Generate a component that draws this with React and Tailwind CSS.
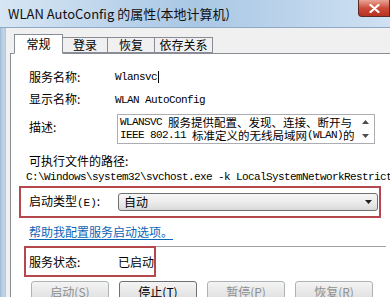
import React from 'react';

const cjk = { fontFamily: '"Noto Sans CJK SC", "Noto Sans", sans-serif' };

const Mono = ({ children }) => (
  <span className="font-['Liberation_Mono',monospace] text-[11px] tracking-[-0.6px] whitespace-pre">{children}</span>
);

const Row = ({ label, children, className = '' }) => (
  <div className={`flex pl-[10px] ${className}`}>
    <div className="w-[89px] shrink-0">{label}</div>
    <div className="flex-1 min-w-0">{children}</div>
  </div>
);

const Btn = ({ children, disabled }) => (
  <div
    className={`w-[78px] h-[22px] shrink-0 flex items-center justify-center rounded-[3px] border bg-gradient-to-b from-[#f4f4f4] to-[#dcdcdc] text-[12px] ${
      disabled ? 'border-[#adb2b5] text-[#8e8f8f]' : 'border-[#707070] text-black'
    }`}
  >
    {children}
  </div>
);

const Tab = ({ children, active, w }) => (
  <div
    className={`flex items-center justify-center border border-[#898c95] ${w} ${
      active
        ? 'h-[20px] bg-white border-b-white -mb-px z-10 relative'
        : 'h-[16px] bg-[#f0f0f0] -ml-px'
    }`}
  >
    {children}
  </div>
);

export default function App() {
  return (
    <div className="w-[390px] h-[297px] overflow-hidden bg-[#f0f0f0] text-black text-[12px] leading-none" style={cjk}>
      {/* Title bar */}
      <div className="h-[28px] flex bg-gradient-to-r from-[#d7e6f4] via-[#a9c7e4] to-[#cfe1f2] border-b border-[#8ea9c6]">
        <div className="flex-1 flex items-center pl-[8px] text-[13px] text-[#111]">WLAN AutoConfig 的属性(本地计算机)</div>
        <div className="w-[32px] h-[17px] bg-gradient-to-b from-[#e9a497] via-[#cc4b3b] to-[#b8321f] border border-[#5c2a24] border-t-0 rounded-bl-[4px] flex items-center justify-center">
          <svg width="11" height="9" viewBox="0 0 11 9">
            <path d="M1.5 1 L9.5 8 M9.5 1 L1.5 8" stroke="white" strokeWidth="2.2" strokeLinecap="round" />
          </svg>
        </div>
      </div>

      <div className="flex h-[269px]">
        {/* Window frame */}
        <div className="w-[6px] shrink-0 bg-gradient-to-r from-[#9fb9d3] via-[#c3d6e8] to-[#b1c8de]" />

        <div className="flex-1 pl-[4px] pt-[6px] flex flex-col">
          {/* Tabs */}
          <div className="flex items-end h-[20px] pl-[4px]">
            <Tab active w="w-[49px]">常规</Tab>
            <Tab w="w-[46px]">登录</Tab>
            <Tab w="w-[48px]">恢复</Tab>
            <Tab w="w-[59px]">依存关系</Tab>
          </div>

          {/* Panel */}
          <div className="flex-1 bg-white border border-[#898c95] border-r-0 pl-[8px] pt-[12px]">
            <Row label="服务名称:" className="h-[22px] items-center">
              <div className="flex items-center -ml-[3px]">
                <Mono>Wlansvc</Mono>
                <span className="w-px h-[12px] bg-black ml-px" />
              </div>
            </Row>
            <Row label="显示名称:" className="h-[22px] items-center">
              <div className="-ml-[3px]">
                <Mono>WLAN AutoConfig</Mono>
              </div>
            </Row>
            <Row label={<div className="pt-[7px]">描述:</div>} className="mt-[4px]">
              <div className="h-[30px] w-[258px] -ml-[1px] border border-[#abadb3] flex">
                <div className="flex-1 min-w-0 pl-[2px] pt-px whitespace-nowrap overflow-hidden text-[11.5px]">
                  <div className="h-[13px] flex items-center">
                    <Mono>WLANSVC </Mono>
                    <span>服务提供配置、发现、连接、断开与</span>
                  </div>
                  <div className="h-[13px] flex items-center">
                    <Mono>IEEE 802.11 </Mono>
                    <span>标准定义的无线局域网</span>
                    <Mono>(WLAN)</Mono>
                    <span>的</span>
                  </div>
                </div>
                <div className="w-[17px] shrink-0 flex flex-col items-center justify-between py-[5px]">
                  <svg width="7" height="4" viewBox="0 0 7 4"><path d="M0 4 L3.5 0 L7 4 Z" fill="#4d4d4d" /></svg>
                  <svg width="7" height="4" viewBox="0 0 7 4"><path d="M0 0 L3.5 4 L7 0 Z" fill="#4d4d4d" /></svg>
                </div>
              </div>
            </Row>

            <div className="pl-[10px] mt-[9px] h-[16px] flex items-center">可执行文件的路径:</div>
            <div className="pl-[7px] h-[16px] flex items-center whitespace-nowrap overflow-hidden">
              <Mono>C:\Windows\system32\svchost.exe -k LocalSystemNetworkRestricted</Mono>
            </div>

            {/* Startup type */}
            <div className="mt-px w-[362px] h-[32px] border-2 border-[#b5484d] flex items-center pl-[8px] pr-[1px]">
              <div className="w-[89px] shrink-0">
                启动类型<span className="font-['Liberation_Mono',monospace] text-[11px]">(E)</span>:
              </div>
              <div className="flex-1 h-[18px] rounded-[3px] border border-[#707070] bg-gradient-to-b from-[#f7f7f7] via-[#ececec] to-[#d9d9d9] flex items-center pl-[5px] pr-[5px]">
                <span className="flex-1">自动</span>
                <svg width="7" height="4" viewBox="0 0 7 4"><path d="M0 0 L3.5 4 L7 0 Z" fill="#222" /></svg>
              </div>
            </div>

            <div className="pl-[10px] mt-[6px] h-[16px] flex items-center">
              <span className="text-[#0a66b7] underline underline-offset-2">帮助我配置服务启动选项。</span>
            </div>

            {/* Service status */}
            <div className="flex items-start mt-[6px]">
              <div className="ml-[5px] w-[132px] h-[31px] border-2 border-[#b5484d] flex items-center pl-[3px] whitespace-nowrap">
                <span className="w-[89px] shrink-0">服务状态:</span>
                <span>已启动</span>
              </div>
              <div className="flex-1 mr-[18px] border-t border-[#a0a0a0]" />
            </div>

            <div className="flex gap-[10px] pl-[12px] mt-[4px]">
              <Btn disabled>启动(S)</Btn>
              <Btn>停止(T)</Btn>
              <Btn disabled>暂停(P)</Btn>
              <Btn disabled>恢复(R)</Btn>
            </div>
          </div>
        </div>
      </div>
    </div>
  );
}
